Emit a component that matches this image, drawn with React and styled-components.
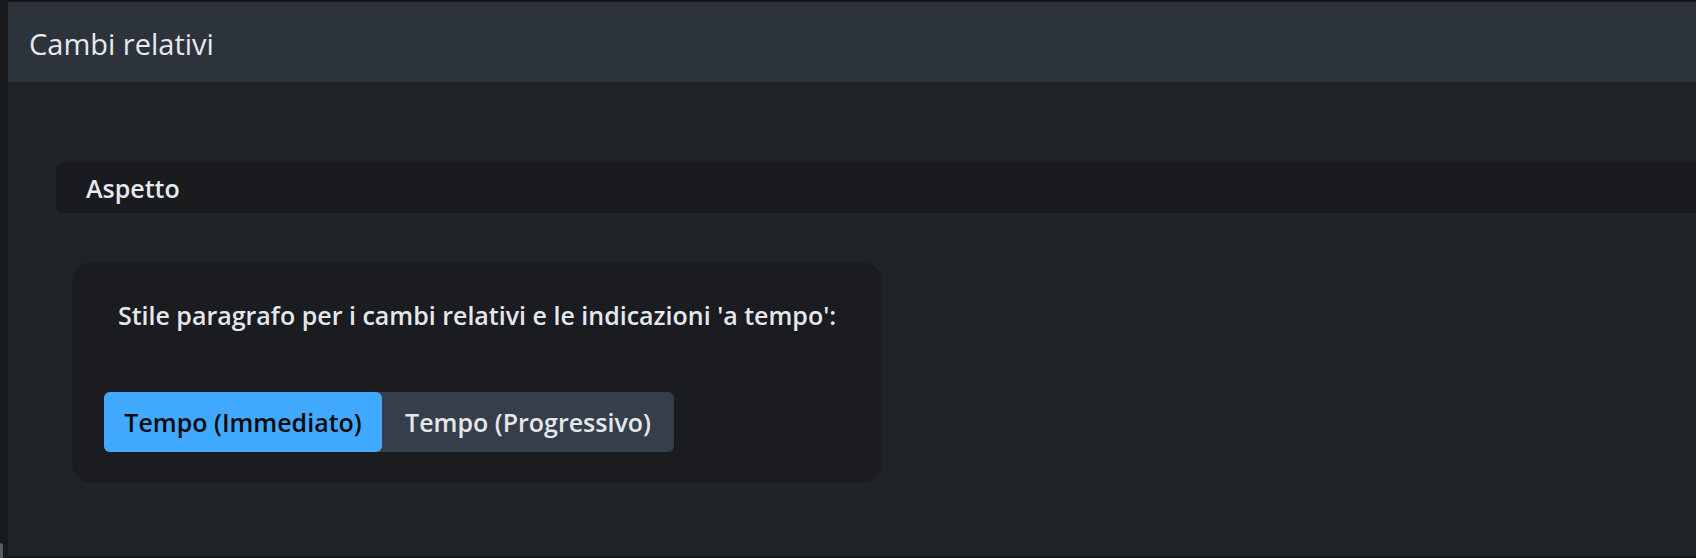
import styled, { createGlobalStyle } from 'styled-components'
import { useState } from 'react'

const GlobalStyle = createGlobalStyle`
  html, body {
    margin: 0;
    padding: 0;
    background-color: #17191c;
  }

  body {
    font-family: "Open Sans", "Noto Sans", "Liberation Sans", sans-serif;
    color: #e4e7ec;
  }
`

// Styles
const Window = styled.div`
  position: relative;
  box-sizing: border-box;
  display: flex;
  flex-direction: column;
  width: 1696px;
  height: 558px;
  padding: 2px 0 2px 8px;
  background-color: #17191c;
  overflow: hidden;
`

const ScrollNub = styled.div`
  position: absolute;
  left: 0;
  bottom: 0;
  width: 3px;
  height: 15px;
  border-top-right-radius: 3px;
  background-color: #535c69;
`

const Panel = styled.div`
  display: flex;
  flex-direction: column;
  flex: 1;
  background-color: #202428;
`

const Header = styled.header`
  display: flex;
  align-items: center;
  height: 80px;
  padding: 2px 0 0 21px;
  box-sizing: border-box;
  background-color: #2d333b;
  font-size: 29px;
  font-weight: 400;
  color: #e6e9ee;
`

const Body = styled.div`
  padding: 80px 0 0 48px;
`

const SectionBar = styled.div`
  display: flex;
  align-items: center;
  height: 51px;
  padding: 1px 0 0 30px;
  box-sizing: border-box;
  border-radius: 6px 0 0 6px;
  background-color: #191b1f;
  font-size: 25px;
  font-weight: 600;
  color: #e6e9ee;
`

const Card = styled.div`
  box-sizing: border-box;
  display: flex;
  flex-direction: column;
  align-items: flex-start;
  width: 810px;
  height: 221px;
  margin: 49px 0 0 16px;
  padding: 36px 32px 0;
  border-radius: 20px;
  background-color: #1a1c20;
`

const Label = styled.p`
  align-self: stretch;
  margin: 0;
  font-size: 25px;
  font-weight: 600;
  line-height: 34px;
  text-align: center;
  white-space: nowrap;
  color: #e4e7ec;
`

const Segmented = styled.div`
  display: inline-flex;
  margin-top: 60px;
  border-radius: 6px;
  background-color: #363e4a;
`

const SegButton = styled.button`
  width: ${({ $width }) => $width}px;
  height: 60px;
  padding: 0;
  border: 0;
  border-radius: 6px;
  background-color: ${({ $active }) => ($active ? '#41a9ff' : 'transparent')};
  font-family: inherit;
  font-size: 25px;
  font-weight: 600;
  white-space: nowrap;
  color: ${({ $active }) => ($active ? '#0a0b0d' : '#e4e7ec')};
  cursor: pointer;
`

const options = [
  { label: 'Tempo (Immediato)', width: 278 },
  { label: 'Tempo (Progressivo)', width: 292 },
]

const App = () => {
  const [selected, setSelected] = useState(0)

  return (
    <>
      <GlobalStyle />
      <Window>
        <Panel>
          <Header>Cambi relativi</Header>
          <Body>
            <SectionBar>Aspetto</SectionBar>
            <Card>
              <Label>Stile paragrafo per i cambi relativi e le indicazioni 'a tempo':</Label>
              <Segmented>
                {options.map((option, i) => (
                  <SegButton
                    key={option.label}
                    $active={selected === i}
                    $width={option.width}
                    onClick={() => setSelected(i)}
                  >
                    {option.label}
                  </SegButton>
                ))}
              </Segmented>
            </Card>
          </Body>
        </Panel>
        <ScrollNub />
      </Window>
    </>
  )
}

export default App
